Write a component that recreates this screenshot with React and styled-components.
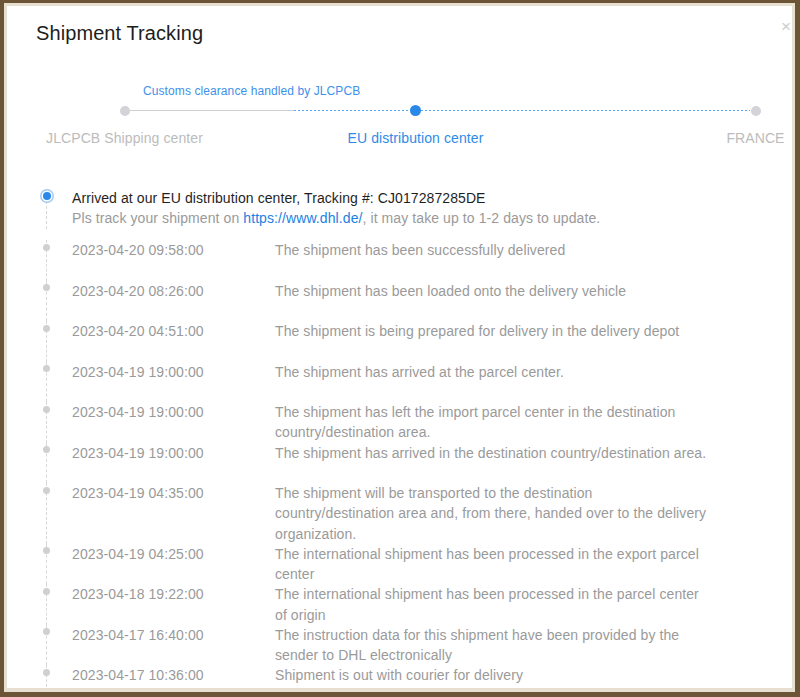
import React from "react";
import styled, { createGlobalStyle } from "styled-components";

const GlobalStyle = createGlobalStyle`
  html, body {
    margin: 0;
    padding: 0;
    background: #6c5536;
  }
  body {
    font-family: "Liberation Sans", Arial, sans-serif;
    letter-spacing: 0.09px;
  }
  * { box-sizing: border-box; }
`;

const events = [
  { time: "2023-04-20 09:58:00", text: "The shipment has been successfully delivered" },
  { time: "2023-04-20 08:26:00", text: "The shipment has been loaded onto the delivery vehicle" },
  { time: "2023-04-20 04:51:00", text: "The shipment is being prepared for delivery in the delivery depot" },
  { time: "2023-04-19 19:00:00", text: "The shipment has arrived at the parcel center." },
  { time: "2023-04-19 19:00:00", text: "The shipment has left the import parcel center in the destination country/destination area." },
  { time: "2023-04-19 19:00:00", text: "The shipment has arrived in the destination country/destination area." },
  { time: "2023-04-19 04:35:00", text: "The shipment will be transported to the destination country/destination area and, from there, handed over to the delivery organization." },
  { time: "2023-04-19 04:25:00", text: "The international shipment has been processed in the export parcel center" },
  { time: "2023-04-18 19:22:00", text: "The international shipment has been processed in the parcel center of origin" },
  { time: "2023-04-17 16:40:00", text: "The instruction data for this shipment have been provided by the sender to DHL electronically" },
  { time: "2023-04-17 10:36:00", text: "Shipment is out with courier for delivery" },
];

export default function App() {
  return (
    <>
      <GlobalStyle />
      <Frame>
        <Modal>
          <Title>Shipment Tracking</Title>
          <Close>×</Close>

          <Stepper>
            <StepNote>Customs clearance handled by JLCPCB</StepNote>
            <Track>
              <Step>
                <DotSlot><StepDot /></DotSlot>
                <StepLabel>JLCPCB Shipping center</StepLabel>
              </Step>
              <Segment $w={164} />
              <Segment $w={116} $dotted />
              <Step>
                <DotSlot><StepDot $active /></DotSlot>
                <StepLabel $active>EU distribution center</StepLabel>
              </Step>
              <Segment $w={329} $dotted />
              <Step>
                <DotSlot><StepDot /></DotSlot>
                <StepLabel>FRANCE</StepLabel>
              </Step>
            </Track>
          </Stepper>

          <Timeline>
            <Item $head>
              <Rail $first>
                <HeadDot />
              </Rail>
              <HeadBody>
                <HeadTitle>Arrived at our EU distribution center, Tracking #: CJ017287285DE</HeadTitle>
                <HeadNote>
                  Pls track your shipment on <Link href="#">https://www.dhl.de/</Link>, it may take up to 1-2 days to update.
                </HeadNote>
              </HeadBody>
            </Item>
            {events.map((e, i) => (
              <Item key={i}>
                <Rail>
                  <Dot />
                </Rail>
                <Time>{e.time}</Time>
                <Desc>{e.text}</Desc>
              </Item>
            ))}
          </Timeline>
        </Modal>
      </Frame>
    </>
  );
}

const Frame = styled.div`
  margin: 3px 5px 5px 4px;
  border-style: solid;
  border-color: #e7e0d0;
  border-width: 3px 3px 4px 3px;
  box-shadow: inset 0 0 0 1px #f4f0e8;
`;

const Modal = styled.div`
  position: relative;
  height: 682px;
  overflow: hidden;
  background: #fff;
  padding: 16px 8px 0 29px;
`;

const Title = styled.h2`
  margin: 0;
  font-size: 20px;
  line-height: 23px;
  font-weight: normal;
  color: #1d1d1d;
`;

const Close = styled.span`
  position: absolute;
  top: 11px;
  right: 1px;
  font-size: 17px;
  line-height: 20px;
  color: #cdcdcd;
`;

const Stepper = styled.div`
  margin-top: 39px;
`;

const StepNote = styled.div`
  margin-left: 107px;
  font-size: 12px;
  line-height: 14px;
  color: #3d91ea;
`;

const Track = styled.div`
  display: flex;
  align-items: flex-start;
  margin: 7px 0 0 83px;
`;

const Step = styled.div`
  display: flex;
  flex-direction: column;
  align-items: center;
  width: 11px;
`;

const DotSlot = styled.div`
  display: flex;
  align-items: center;
  justify-content: center;
  width: 11px;
  height: 11px;
`;

const StepDot = styled.div`
  width: ${(p) => (p.$active ? 11 : 10)}px;
  height: ${(p) => (p.$active ? 11 : 10)}px;
  border-radius: 50%;
  background: ${(p) => (p.$active ? "#2a88e8" : "#d3d3d8")};
`;

const StepLabel = styled.div`
  margin-top: 14px;
  white-space: nowrap;
  font-size: 14px;
  line-height: 16px;
  color: ${(p) => (p.$active ? "#2f8be6" : "#bcbcbc")};
`;

const Segment = styled.div`
  width: ${(p) => p.$w}px;
  height: 1px;
  margin-top: 5px;
  background: ${(p) =>
    p.$dotted
      ? "repeating-linear-gradient(90deg, #5aa8f0 0 2px, transparent 2px 4px)"
      : "#cfcfcf"};
`;

const Timeline = styled.div`
  margin-top: 42px;
`;

const Item = styled.div`
  display: grid;
  grid-template-columns: 20px 187px 434px;
  column-gap: 16px;
  min-height: 40.5px;
  padding-bottom: ${(p) => (p.$head ? "11.5px" : "0")};
  font-size: 14px;
  line-height: 20.25px;
`;

const Rail = styled.div`
  position: relative;
  display: flex;
  justify-content: center;
  &::before {
    content: "";
    position: absolute;
    left: 50%;
    top: ${(p) => (p.$first ? "8px" : "0")};
    bottom: 0;
    border-left: 1px dashed #d8d8d8;
  }
`;

const Dot = styled.div`
  position: relative;
  width: 7px;
  height: 7px;
  margin-top: 3.5px;
  margin-left: 1px;
  border-radius: 50%;
  background: #d0d0d0;
`;

const HeadDot = styled.div`
  position: relative;
  width: 8px;
  height: 8px;
  margin-top: 4px;
  margin-left: 1px;
  border-radius: 50%;
  background: #2a88e8;
  box-shadow: 0 0 0 1.5px #fff, 0 0 0 3px #9fcbf4;
`;

const HeadBody = styled.div`
  grid-column: 2 / 4;
`;

const HeadTitle = styled.div`
  color: #1f1f1f;
`;

const HeadNote = styled.div`
  color: #9a9a9a;
`;

const Link = styled.a`
  color: #1b7fe3;
  text-decoration: none;
`;

const Time = styled.div`
  color: #9a9a9a;
`;

const Desc = styled.div`
  color: #9a9a9a;
`;
